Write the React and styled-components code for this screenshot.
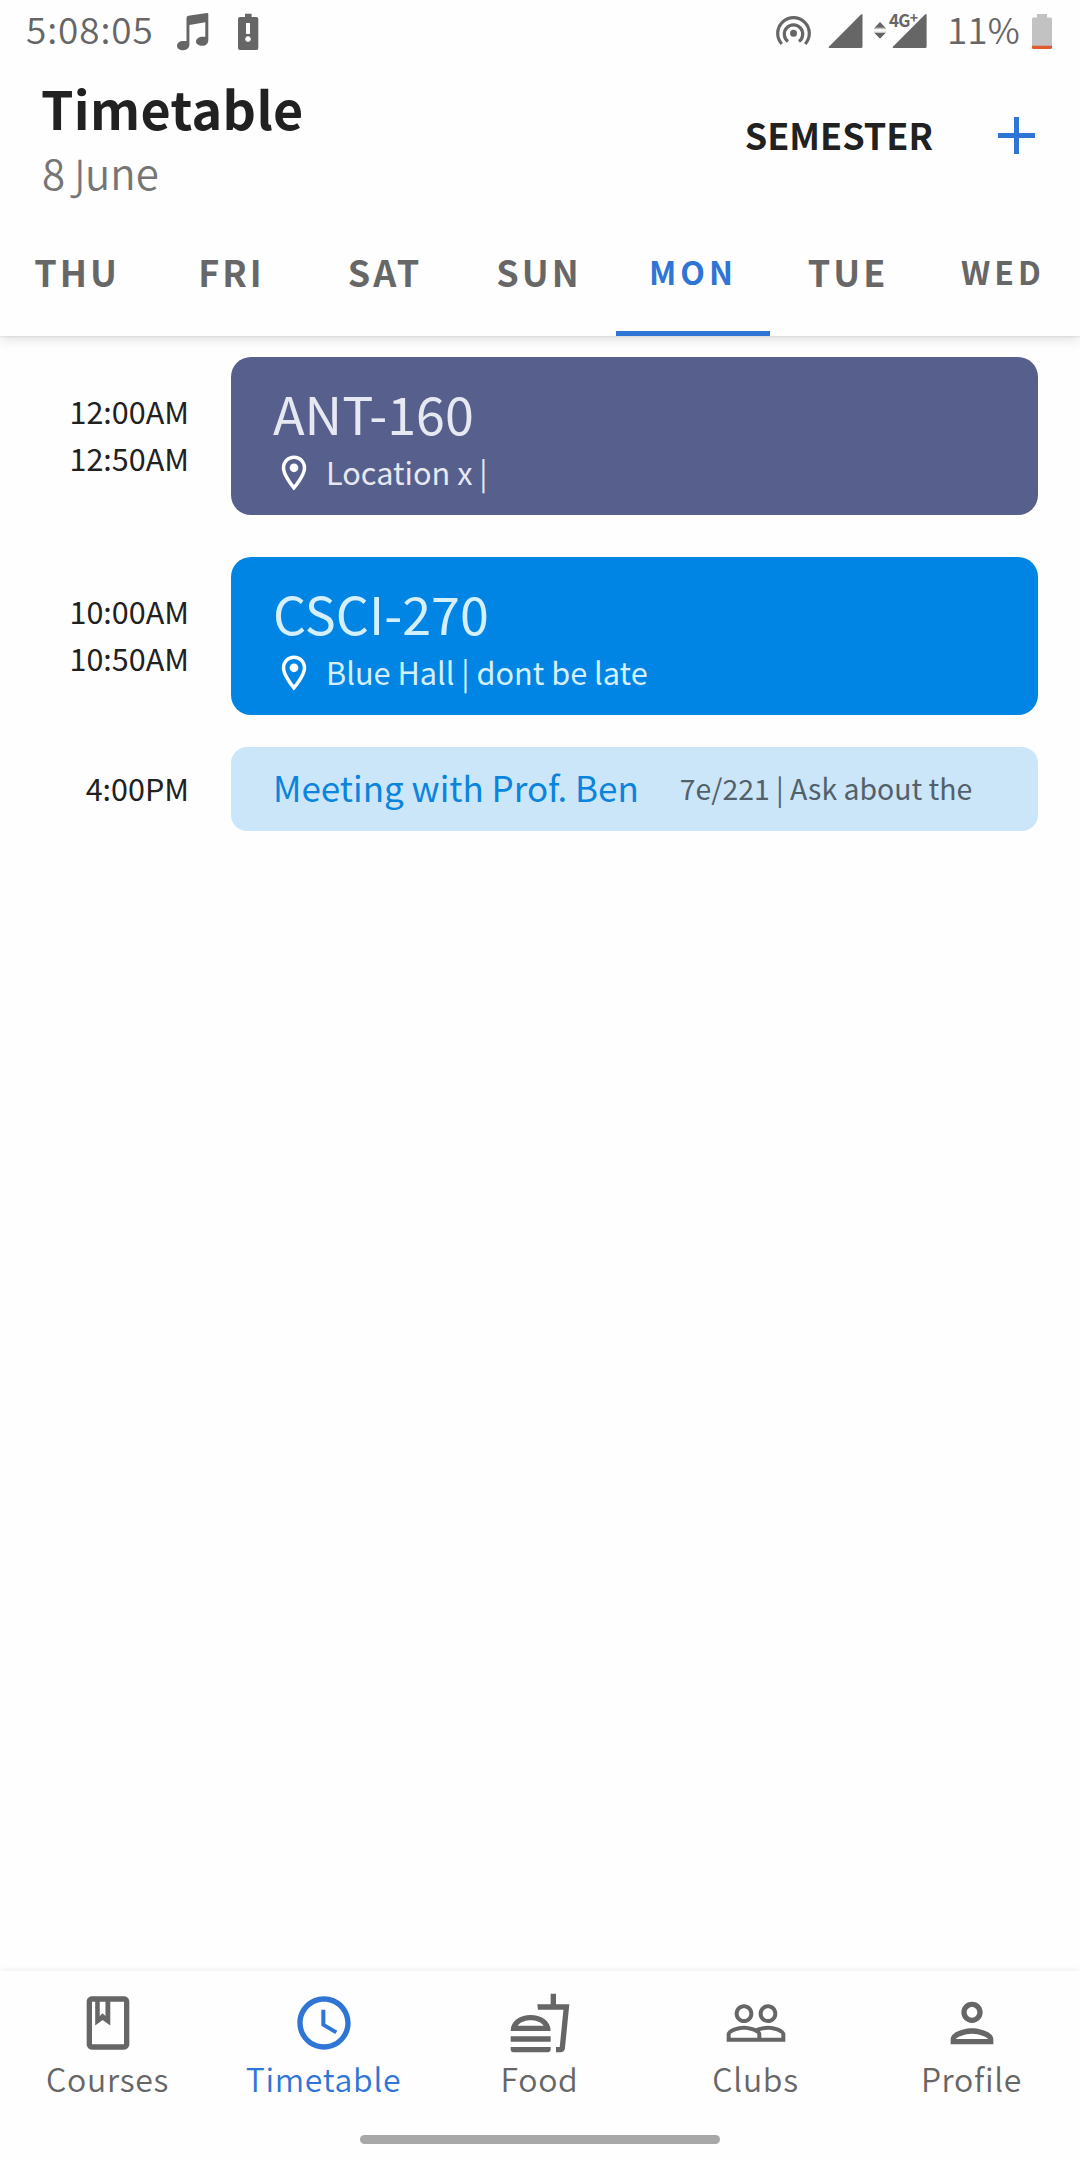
import React from "react";
import styled, { createGlobalStyle } from "styled-components";

const colors = {
  ink: "#212121",
  grey: "#676767",
  soft: "#757575",
  blue: "#2e75d6",
};

const GlobalStyle = createGlobalStyle`
  *, *::before, *::after { box-sizing: border-box; }
  body {
    margin: 0;
    background: #fefefe;
    font-family: "Noto Sans CJK SC", "Noto Sans", sans-serif;
    color: ${colors.ink};
  }
`;

const Screen = styled.div`
  display: flex;
  flex-direction: column;
  width: 1080px;
  min-height: 2160px;
  background: #fefefe;
  overflow: hidden;
`;

const TopBar = styled.header`
  height: 336px;
  background: #fefefe;
  box-shadow: 0 1px 2px rgba(0, 0, 0, 0.08), 0 4px 11px rgba(0, 0, 0, 0.11);
`;

const StatusBar = styled.div`
  display: flex;
  justify-content: space-between;
  height: 56px;
  padding: 0 28px 0 26px;
  color: #666;
  font-size: 37px;
  font-weight: 350;
  line-height: 56px;
`;

const StatusGroup = styled.div`
  display: flex;
`;

const Clock = styled.span`
  width: 150px;
  letter-spacing: 0.9px;
  white-space: nowrap;
`;

const StatusIcon = styled.svg`
  display: block;
  flex: none;
  height: 56px;
  fill: currentColor;
`;

const Network = styled.div`
  display: flex;
  width: 53px;
  position: relative;
`;

const NetworkLabel = styled.span`
  position: absolute;
  left: 15px;
  top: 10px;
  font-size: 17px;
  font-weight: 700;
  line-height: 20px;
  letter-spacing: -0.8px;
`;

const NetworkPlus = styled.sup`
  font-size: 14px;
  font-weight: 700;
  line-height: 0;
  vertical-align: 4px;
`;

const Charge = styled.span`
  width: 83px;
  padding-left: 20px;
  white-space: nowrap;
`;

const Percent = styled.span`
  font-size: 35px;
  letter-spacing: -1px;
`;

const Heading = styled.div`
  display: flex;
  justify-content: space-between;
  align-items: flex-start;
  height: 150px;
  padding: 18px 45px 0 41px;
`;

const Title = styled.h1`
  margin: 0;
  font-size: 52px;
  font-weight: 700;
  line-height: 67px;
  letter-spacing: 0.35px;
`;

const DateLine = styled.div`
  padding-left: 1px;
  color: ${colors.soft};
  font-size: 42px;
  font-weight: 350;
  line-height: 61px;
`;

const Descending = styled.span`
  font-family: "Noto Sans", sans-serif;
  font-weight: 300;
  line-height: 0;
  -webkit-text-stroke: 0.4px currentColor;
`;

const Actions = styled.div`
  display: flex;
  align-items: center;
  gap: 65px;
  height: 123px;
`;

const Semester = styled.span`
  margin-top: -4px;
  font-size: 36px;
  font-weight: 700;
  line-height: 50px;
`;

const AddIcon = styled.svg`
  display: block;
  width: 37px;
  height: 37px;
  fill: ${colors.blue};
`;

const Tabs = styled.nav`
  display: flex;
  height: 130px;
`;

const Tab = styled.div`
  width: 154px;
  padding-left: ${(p) => p.$shift || 0}px;
  text-align: center;
  line-height: 130px;
  font-weight: 700;
  font-size: ${(p) => (p.$small ? 32 : 36)}px;
  letter-spacing: ${(p) => (p.$small ? 4 : 3)}px;
  color: ${(p) => (p.$active ? colors.blue : colors.grey)};
  box-shadow: ${(p) => (p.$active ? `inset 0 -5px ${colors.blue}` : "none")};
`;

const Agenda = styled.main`
  flex: 1;
  padding: 21px 42px 0 0;
`;

const Entry = styled.div`
  display: grid;
  grid-template-columns: 189px 1fr;
  column-gap: 42px;
  align-items: center;
  margin-bottom: ${(p) => p.$gap}px;
`;

const Times = styled.div`
  padding-bottom: 2px;
  text-align: right;
  font-size: 30.5px;
  line-height: 47px;
`;

const CourseCard = styled.div`
  height: 158px;
  padding: 23px 42px 0;
  border-radius: 20px;
  background: ${(p) => p.$bg};
  color: ${(p) => p.$fg};
  white-space: nowrap;
`;

const CourseName = styled.div`
  font-size: 52px;
  line-height: 66px;
`;

const Place = styled.div`
  display: flex;
  align-items: center;
  gap: 11px;
  font-size: 30.7px;
  line-height: 51px;
`;

const PinIcon = styled.svg`
  width: 42px;
  height: 42px;
  margin-top: 2px;
  fill: #fff;
`;

const EventCard = styled.div`
  display: flex;
  align-items: center;
  gap: 41px;
  height: 84px;
  padding: 0 42px 4px;
  border-radius: 16px;
  background: #cce6f9;
  white-space: nowrap;
`;

const EventName = styled.span`
  color: #0a84dc;
  font-size: 35px;
  line-height: 50px;
`;

const EventNote = styled.span`
  padding-top: 2px;
  color: #52606a;
  font-size: 28.4px;
  line-height: 50px;
`;

const BottomBar = styled.footer`
  height: 189px;
  background: #fefefe;
  box-shadow: 0 -1px 5px rgba(0, 0, 0, 0.07);
`;

const NavItems = styled.nav`
  display: flex;
  height: 164px;
  padding-top: 20px;
`;

const NavItem = styled.div`
  flex: 1;
  display: flex;
  flex-direction: column;
  align-items: center;
  padding-right: 1px;
  color: ${(p) => (p.$active ? colors.blue : "#666")};
`;

const NavIcon = styled.svg`
  display: block;
  width: 64px;
  height: 64px;
  fill: currentColor;
`;

const NavLabel = styled.span`
  font-size: 32px;
  font-weight: 350;
  line-height: 47px;
  letter-spacing: 0.7px;
`;

const HomePill = styled.div`
  width: 360px;
  height: 9px;
  margin: 0 auto;
  border-radius: 5px;
  background: #a8a8a8;
`;

const days = [
  { label: "THU" },
  { label: "FRI", shift: 1 },
  { label: "SAT" },
  { label: "SUN" },
  { label: "MON", small: true, active: true },
  { label: "TUE", shift: 2 },
  { label: "WED", small: true, shift: 4 },
];

const courses = [
  { start: "12:00AM", end: "12:50AM", name: "ANT-160", place: "Location x |", bg: "#575f8c", fg: "#e6e8f2", gap: 42 },
  { start: "10:00AM", end: "10:50AM", name: "CSCI-270", place: "Blue Hall | dont be late", bg: "#0085e4", fg: "#d6effd", gap: 32 },
];

const navItems = [
  {
    label: "Courses",
    path: "M18 2H6c-1.1 0-2 .9-2 2v16c0 1.1.9 2 2 2h12c1.1 0 2-.9 2-2V4c0-1.1-.9-2-2-2zM18 20H6V4h1.2v8.9L10 10.9l2.85 2V4H18zM8.9 4h2.15v5.4L10 8.3 8.9 9.4z",
  },
  {
    label: "Timetable",
    active: true,
    path: "M11.99 2C6.47 2 2 6.48 2 12s4.47 10 9.99 10C17.52 22 22 17.52 22 12S17.52 2 11.99 2zM12 20c-4.42 0-8-3.58-8-8s3.58-8 8-8 8 3.58 8 8-3.58 8-8 8zm.5-13H11v6l5.25 3.15.75-1.23-4.5-2.67z",
  },
  {
    label: "Food",
    path: "M1 21.98c0 .56.45 1.01 1.01 1.01H15c.56 0 1.01-.45 1.01-1.01V21H1v.98zM8.5 8.99C4.75 8.99 1 11 1 15h15c0-4-3.75-6.01-7.5-6.01zM3.62 13c1.11-1.55 3.47-2.01 4.88-2.01s3.77.46 4.88 2.01H3.62zM1 17h15v2H1zM18 5V1h-2v4h-5l.23 2h9.56l-1.4 14H18v2h1.72c.84 0 1.53-.65 1.63-1.47L23 5h-5z",
  },
  {
    label: "Clubs",
    path: "M16.5 13c-1.2 0-3.07.34-4.5 1-1.43-.67-3.3-1-4.5-1C5.33 13 1 14.08 1 16.25V19h22v-2.75c0-2.17-4.33-3.25-6.5-3.25zm-4 4.5h-10v-1.25c0-.54 2.56-1.75 5-1.75s5 1.21 5 1.75v1.25zm9 0H14v-1.25c0-.46-.2-.86-.52-1.22.88-.3 1.96-.53 3.02-.53 2.44 0 5 1.21 5 1.75v1.25zM7.5 12c1.93 0 3.5-1.57 3.5-3.5S9.43 5 7.5 5 4 6.57 4 8.5 5.57 12 7.5 12zm0-5.5c1.1 0 2 .9 2 2s-.9 2-2 2-2-.9-2-2 .9-2 2-2zm9 5.5c1.93 0 3.5-1.57 3.5-3.5S18.43 5 16.5 5 13 6.57 13 8.5s1.57 3.5 3.5 3.5zm0-5.5c1.1 0 2 .9 2 2s-.9 2-2 2-2-.9-2-2 .9-2 2-2z",
  },
  {
    label: "Profile",
    path: "M12 6c1.1 0 2 .9 2 2s-.9 2-2 2-2-.9-2-2 .9-2 2-2m0 10c2.7 0 5.8 1.29 6 2H6c.23-.72 3.31-2 6-2m0-12C9.79 4 8 5.79 8 8s1.79 4 4 4 4-1.79 4-4-1.79-4-4-4zm0 10c-2.67 0-8 1.34-8 4v2h16v-2c0-2.66-5.33-4-8-4z",
  },
];

function Status() {
  return (
    <StatusBar>
      <StatusGroup>
        <Clock>5:08:05</Clock>
        <StatusIcon width="34" viewBox="176 0 34 56">
          <path d="M188.3 15.8 207 12.9q1.3-.1 1.3 1v26.6c0 3-2.5 5.3-6 5.3s-6.3-1.7-6.3-4.3 2.8-4.8 6.3-4.8h3V22.3L189.4 25v19.5c0 3.3-2.4 5.7-6.2 5.7s-6.2-1.9-6.2-4.5 2.8-4.7 6.2-4.7h3.3V18q0-2 1.8-2.2z" />
        </StatusIcon>
        <StatusIcon width="60" viewBox="210 0 60 56">
          <path
            fillRule="evenodd"
            d="M245 13.700h6.600V17h4.700a2 2 0 0 1 2 2v29a2 2 0 0 1-2 2h-16.300a2 2 0 0 1-2-2V19a2 2 0 0 1 2-2h5zM246 23v11h4V23zM248 36.300a2.800 2.800 0 1 0 .01 0z"
          />
        </StatusIcon>
      </StatusGroup>
      <StatusGroup>
        <StatusIcon width="38" viewBox="775 0 38 56">
          <circle cx="793.5" cy="33.2" r="3.5" />
          <path
            d="M788 41.5A9.2 9.2 0 1 1 799 41.5M781.8 44A15.8 15.8 0 1 1 805.2 44"
            fill="none"
            stroke="currentColor"
            strokeWidth="3.2"
          />
        </StatusIcon>
        <StatusIcon width="61" viewBox="813 0 61 56">
          <path d="M862.5 14.300V46.500q0 1.500-1.500 1.500H829.300q-1.200-.4-.4-1.300L861 14.500q1.200-.9 1.500-.2z" />
        </StatusIcon>
        <Network>
          <StatusIcon width="53" viewBox="874 0 53 56">
            <path d="M874.5 27.700 880 22l5.500 5.700zM874.500 33 880 38.700l5.500-5.700z" />
            <path d="M874 28.6h12M874 32.3h12" stroke="#bbb" strokeWidth="1" />
            <path d="M926.6 14.300V46.500q0 1.500-1.500 1.500H893.300q-1.200-.4-.4-1.300L925 14.500q1.200-.9 1.600-.2z" />
          </StatusIcon>
          <NetworkLabel>
            4G<NetworkPlus>+</NetworkPlus>
          </NetworkLabel>
        </Network>
        <Charge>
          11<Percent>%</Percent>
        </Charge>
        <StatusIcon width="42" viewBox="1010 0 42 56">
          <path fill="#c2c2c2" d="M1037 14h10v3.500h3.500q1.500 0 1.500 1.500v27h-20V19q0-1.500 1.500-1.500h3.500z" />
          <path fill="#e05a30" d="M1032 45.700h20v1.800q0 1.500-1.500 1.500h-17q-1.500 0-1.500-1.500z" />
        </StatusIcon>
      </StatusGroup>
    </StatusBar>
  );
}

export default function App() {
  return (
    <>
      <GlobalStyle />
      <Screen>
        <TopBar>
          <Status />
          <Heading>
            <div>
              <Title>Timetable</Title>
              <DateLine>
                8 <Descending>J</Descending>une
              </DateLine>
            </div>
            <Actions>
              <Semester>SEMESTER</Semester>
              <AddIcon viewBox="0 0 37 37">
                <path d="M16 0h5v16h16v5H21v16h-5V21H0v-5h16z" />
              </AddIcon>
            </Actions>
          </Heading>
          <Tabs>
            {days.map((d) => (
              <Tab key={d.label} $small={d.small} $active={d.active} $shift={d.shift}>
                {d.label}
              </Tab>
            ))}
          </Tabs>
        </TopBar>

        <Agenda>
          {courses.map((c) => (
            <Entry key={c.name} $gap={c.gap}>
              <Times>
                <div>{c.start}</div>
                <div>{c.end}</div>
              </Times>
              <CourseCard $bg={c.bg} $fg={c.fg}>
                <CourseName>{c.name}</CourseName>
                <Place>
                  <PinIcon viewBox="0 0 24 24">
                    <path d="M12 2C8.13 2 5 5.13 5 9c0 5.25 7 13 7 13s7-7.75 7-13c0-3.87-3.13-7-7-7zM7 9c0-2.76 2.24-5 5-5s5 2.24 5 5c0 2.88-2.88 7.19-5 9.88C9.92 16.21 7 11.85 7 9z" />
                    <circle cx="12" cy="9" r="2.5" />
                  </PinIcon>
                  {c.place}
                </Place>
              </CourseCard>
            </Entry>
          ))}
          <Entry $gap={0}>
            <Times>4:00PM</Times>
            <EventCard>
              <EventName>Meeting with Prof. Ben</EventName>
              <EventNote>7e/221 | Ask about the</EventNote>
            </EventCard>
          </Entry>
        </Agenda>

        <BottomBar>
          <NavItems>
            {navItems.map((n) => (
              <NavItem key={n.label} $active={n.active}>
                <NavIcon viewBox="0 0 24 24">
                  <path fillRule="evenodd" d={n.path} />
                </NavIcon>
                <NavLabel>{n.label}</NavLabel>
              </NavItem>
            ))}
          </NavItems>
          <HomePill />
        </BottomBar>
      </Screen>
    </>
  );
}
